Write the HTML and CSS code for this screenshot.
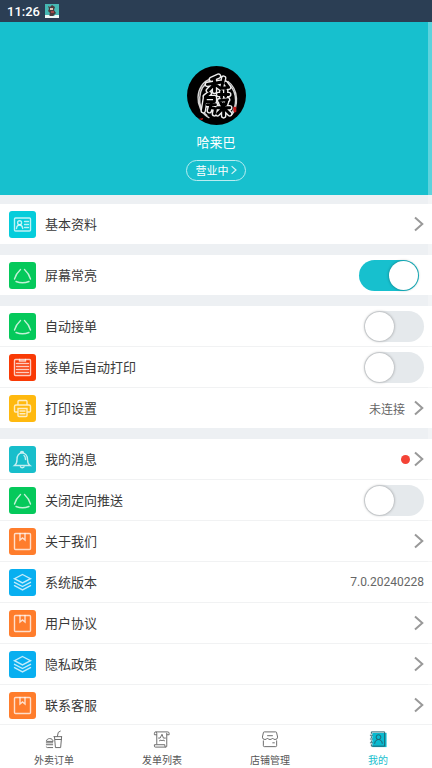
FILE: index.html
```html
<!DOCTYPE html>
<html lang="zh-CN">
<head>
<meta charset="utf-8">
<meta name="viewport" content="width=device-width, initial-scale=1">
<title>我的</title>
<link rel="stylesheet" href="styles.css">
</head>
<body>
<svg class="defs" aria-hidden="true">
  <symbol id="card" viewBox="0 0 27 27"><rect x="5.5" y="7" width="16" height="13" rx="1"/><circle cx="10.6" cy="11.7" r="2"/><path d="M7.5 17.500c.3-2.500 1.500-3.500 3.100-3.500s2.800 1 3.100 3.500M15.500 10.500h4M15.500 13.500h4M15.500 16.500h4"/></symbol>
  <symbol id="tri" viewBox="0 0 27 27"><path d="M11.500 7.500C8.800 10 6.500 13.500 5.500 17M15.500 7.500c2.700 2.500 5 6 6 9.500M7 19.500c4 1.500 9 1.500 13 0"/></symbol>
  <symbol id="note" viewBox="0 0 27 27"><rect x="5.500" y="5.500" width="16" height="16" rx="1"/><path d="M10.500 5.500v1.500h6v-1.500M7.500 9.500h12M7.500 12.500h12M7.500 15.500h12M7.500 18.500h12"/></symbol>
  <symbol id="printer" viewBox="0 0 27 27"><path d="M9 10V6.500q0-1 1-1h7q1 0 1 1V10M9 17H6.500q-1 0-1-1v-4.500q0-1.500 1.500-1.500h13q1.500 0 1.500 1.500V16q0 1-1 1H18M9 13.500h9v7q0 1-1 1h-7q-1 0-1-1zM11 16h5M11 18.700h5"/></symbol>
  <symbol id="bell" viewBox="0 0 27 27"><path d="M5.500 19.500C7.500 18 8 16 8 13.500c0-4 2-6.500 5-6.500s5.500 2.500 5.500 6.500c0 2.500.5 4.500 2.500 6zM11.500 7c0-2 3-2 3 0M11.500 21c.5 1 3 1 3.500 0M15 9.500c1.200.8 1.500 2.200 1.500 4"/></symbol>
  <symbol id="book" viewBox="0 0 27 27"><rect x="5.500" y="5.500" width="16" height="16" rx="1"/><path d="M11 5.500v6.500l2.500-2 2.500 2V5.500"/></symbol>
  <symbol id="layers" viewBox="0 0 27 27"><path d="M13.500 5.500l8 4.200-8 4.200-8-4.200zM5.500 13.300l8 4.200 8-4.200M5.500 16.700l8 4.200 8-4.200"/></symbol>
  <symbol id="arrow" viewBox="0 0 10 16"><path d="M1 1.500 8.300 8 1 14.500"/></symbol>
</svg>

<div class="status">
  <span>11:26</span>
  <svg class="status-icon" viewBox="0 0 14 14" aria-hidden="true"><path fill="#46b8b4" d="M0 0h14v14H0z"/><path fill="#4b3b3e" d="M3 2l2 1 2-2 3 2-1 3 2 3-3 3H4l1-3-2-2 1-2z"/><path fill="#ddc4b5" d="M5 4h3v2H5z"/><path fill="#a34747" d="M6 7h3v2H6z"/><path fill="#eef8f7" d="M0 11h4l1 1h4l1-1h4v3H0z"/></svg>
</div>

<main class="page">
  <header class="profile">
    <svg class="avatar" viewBox="0 0 58 58" role="img" aria-label="店铺头像">
      <defs><path id="ink" d="M31 10l-7 3M20 18l13-2M27 13v12M26 19l-5 5M29 19l4 3M36 12l-2 10 6-1M38 17l3 4M22 27l-4 3M18 31h9v4h-9zM18 32l-2 12M20 38h8M24 36l-2 8M24 41l4 1-1 5M31 28h10M34 25v6M38 24v6M32 34l8-1M33 36l1 2M39 35l-1 3M30 41h12M36 37v12M35 42l-5 5M37 42l5 5"/></defs>
      <circle cx="29" cy="29" r="29"/>
      <g fill="none" stroke="#d4d4d4" stroke-width="1.400"><path d="M23 13C8 17 6 43 22 51M23 15C10 20 9 41 20 49M40 15c11 8 11 25 3 34"/><path d="M42 19c8 8 7 22 1 28"/></g>
      <g fill="none" stroke-linecap="round" stroke-linejoin="round"><use href="#ink" stroke="#eee" stroke-width="5.500"/><use href="#ink" stroke="#000" stroke-width="2.800"/></g>
      <path fill="#c51b1b" d="M45.500 40h3v5l-2 1-1-2zM11 52l5-1-1 2z"/>
    </svg>
    <h1 class="shop">哈莱巴</h1>
    <button class="state" type="button">营业中<svg class="state-arrow" aria-hidden="true"><use href="#arrow"/></svg></button>
  </header>

  <section class="group">
    <a class="row" href="#info"><svg class="icon cyan"><use href="#card"/></svg><span class="label">基本资料</span><svg class="arrow"><use href="#arrow"/></svg></a>
  </section>
  <section class="group">
    <label class="row inset"><svg class="icon green"><use href="#tri"/></svg><span class="label">屏幕常亮</span><input class="switch" type="checkbox" checked></label>
  </section>
  <section class="group">
    <label class="row"><svg class="icon green"><use href="#tri"/></svg><span class="label">自动接单</span><input class="switch" type="checkbox"></label>
    <label class="row"><svg class="icon red"><use href="#note"/></svg><span class="label">接单后自动打印</span><input class="switch" type="checkbox"></label>
    <a class="row" href="#print"><svg class="icon yellow"><use href="#printer"/></svg><span class="label">打印设置</span><span class="value">未连接</span><svg class="arrow"><use href="#arrow"/></svg></a>
  </section>
  <section class="group">
    <a class="row" href="#messages"><svg class="icon teal"><use href="#bell"/></svg><span class="label">我的消息</span><span class="dot"></span><svg class="arrow"><use href="#arrow"/></svg></a>
    <label class="row"><svg class="icon green"><use href="#tri"/></svg><span class="label">关闭定向推送</span><input class="switch" type="checkbox"></label>
    <a class="row" href="#about"><svg class="icon orange"><use href="#book"/></svg><span class="label">关于我们</span><svg class="arrow"><use href="#arrow"/></svg></a>
    <div class="row"><svg class="icon blue"><use href="#layers"/></svg><span class="label">系统版本</span><span class="value">7.0.20240228</span></div>
    <a class="row" href="#terms"><svg class="icon orange"><use href="#book"/></svg><span class="label">用户协议</span><svg class="arrow"><use href="#arrow"/></svg></a>
    <a class="row" href="#privacy"><svg class="icon blue"><use href="#layers"/></svg><span class="label">隐私政策</span><svg class="arrow"><use href="#arrow"/></svg></a>
    <a class="row" href="#service"><svg class="icon orange"><use href="#book"/></svg><span class="label">联系客服</span><svg class="arrow"><use href="#arrow"/></svg></a>
  </section>
</main>

<nav class="tabs">
  <a class="tab" href="#orders"><svg class="tab-icon" viewBox="0 0 20 20" aria-hidden="true"><path d="M9.500 7h9M10.500 7l1 11.500h5.500L18 7M13.500 7l1-4.500L17 1M11 10h7M2 12c0-4 7-4 7 0zM1.500 13.500H9M1.500 15.500H9M2 17.500q0 1 1 1h6"/></svg>外卖订单</a>
  <a class="tab" href="#list"><svg class="tab-icon" viewBox="0 0 20 20" aria-hidden="true"><path d="M4.500 15V3.500Q4.500 2 3.500 2H16q1.500 0 1.500 1.500V5H15M15 3v12M3.500 2Q2 2 2 3.500V5h2.500M2 15.500h11V17q0 1 1 1t1-1v-2M2 15.500V17q0 1 1 1h11M6 8.500h2l2-4 1.500 4H14M7 11.500l2-1 1 1 1-1 2 1"/></svg>发单列表</a>
  <a class="tab" href="#shop"><svg class="tab-icon" viewBox="0 0 20 20" aria-hidden="true"><path d="M4 2h12q1 0 1 1l1 4.500q0 2.500-2.700 2.500-1.800 0-2.600-1.500Q12 10 10 10T7.300 8.500Q6.500 10 4.700 10 2 10 2 7.500L3 3q0-1 1-1zM3 11v5.500q0 1 1 1h12q1 0 1-1V11M7 6h6M12.500 13.500H15"/></svg>店铺管理</a>
  <a class="tab active" href="#me" aria-current="page"><svg class="tab-icon" viewBox="0 0 20 20" aria-hidden="true"><path class="fill" d="M4 3h15v15H4z"/><path d="M3 4V2h14v15H3v-2M3 6.500v2M3 11v2M1.500 5.500h3M1.500 9.500h3M1.500 13.500h3"/><circle cx="10.500" cy="7.500" r="2.500"/><path d="M6.500 14.500c0-6 8-6 8 0"/></svg>我的</a>
</nav>
</body>
</html>
```

FILE: styles.css
```css
* { box-sizing: border-box; }

body {
  display: flex;
  flex-direction: column;
  height: 100vh;
  margin: 0;
  background: #edf0f3;
  color: #3a3a3a;
  font-family: Roboto, "Noto Sans CJK SC", sans-serif;
  font-size: 13px;
}

a { color: inherit; text-decoration: none; }

.defs { display: none; }

.status {
  display: flex;
  flex: none;
  align-items: center;
  gap: 5px;
  height: 22px;
  padding: 0 7px;
  background: #2b3e54;
  color: #fff;
  font-weight: 500;
}

.status-icon { width: 14px; height: 14px; }

.page {
  position: relative;
  flex: 1;
  min-height: 0;
  overflow-y: auto;
  scrollbar-width: none;
}

/* Translucent scroll track laid over the right edge */
.page::after {
  position: absolute;
  top: 0;
  right: 0;
  width: 4px;
  height: 100%;
  background: rgba(255, 255, 255, 0.3);
  content: "";
  pointer-events: none;
}

.profile {
  display: flex;
  flex-direction: column;
  align-items: center;
  height: 173px;
  margin-bottom: 9px;
  padding-top: 44px;
  background: #17c0ce;
  color: #fff;
}

.avatar { flex: none; width: 59px; height: 59px; }

.shop {
  margin: 8px 0;
  font-size: 13px;
  font-weight: 400;
  line-height: 19px;
}

.state {
  display: flex;
  align-items: center;
  justify-content: center;
  gap: 2px;
  width: 60px;
  height: 21px;
  padding: 0 0 1px;
  border: 1px solid #b9edf1;
  border-radius: 11px;
  background: none;
  color: #fff;
  font: inherit;
  font-size: 11px;
}

.state-arrow {
  width: 6px;
  height: 10px;
  fill: none;
  stroke: #d5f4f6;
  stroke-width: 2px;
}

.group { margin-bottom: 11px; background: #fff; }

.row {
  display: flex;
  align-items: center;
  gap: 9px;
  height: 41px;
  padding: 0 8px 0 9px;
  border-bottom: 1px solid #f1f2f3;
}

.row:last-child { height: 40px; border-bottom: 0; }

.row.inset { padding-right: 13px; }

.icon {
  flex: none;
  width: 27px;
  height: 27px;
  border-radius: 3px;
  fill: none;
  stroke: #fff;
  stroke-linecap: round;
  stroke-opacity: 0.75;
  stroke-width: 1.4;
}

.cyan { background: #05cddb; }
.teal { background: #18becb; }
.green { background: #05c95b; }
.red { background: #f93a05; }
.yellow { background: #ffb90f; }
.orange { background: #ff7d2c; }
.blue { background: #08aff0; }

.label { flex: 1; padding-bottom: 2px; }

.value { color: #666; font-size: 12px; }

.arrow {
  flex: none;
  width: 10px;
  height: 16px;
  fill: none;
  stroke: #999;
  stroke-width: 2px;
}

.dot {
  width: 9px;
  height: 9px;
  margin-right: -5px;
  border-radius: 50%;
  background: #f44336;
}

.switch {
  display: flex;
  flex: none;
  width: 60px;
  height: 31px;
  margin: 0;
  padding: 1px;
  border-radius: 16px;
  appearance: none;
  background: #e5e9ec;
}

.switch::before {
  width: 29px;
  height: 29px;
  border-radius: 50%;
  background: #fff;
  box-shadow: 0 0 3px rgba(0, 0, 0, 0.4);
  content: "";
}

.switch:checked { justify-content: flex-end; background: #17c0ce; }

.tabs {
  display: flex;
  flex: none;
  height: 44px;
  border-top: 1px solid #f1f2f3;
  background: #fff;
}

.tab {
  display: flex;
  flex: 1;
  flex-direction: column;
  align-items: center;
  gap: 4px;
  padding-top: 5px;
  color: #555;
  font-size: 10px;
  line-height: 15px;
}

.tab-icon {
  width: 20px;
  height: 20px;
  fill: none;
  stroke: #666;
}

.active { color: #17c0ce; }
.active .tab-icon { stroke: #24606d; }
.active .fill { fill: #08bad0; stroke: none; }
```
